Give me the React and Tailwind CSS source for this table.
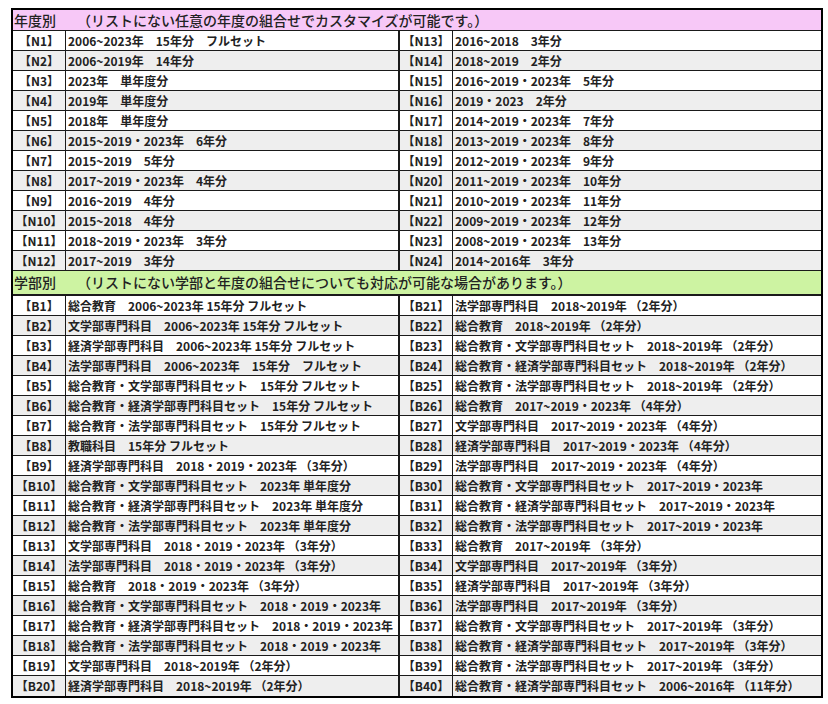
const nLeft = [
  ['N1', '2006~2023年　15年分　フルセット'],
  ['N2', '2006~2019年　14年分'],
  ['N3', '2023年　単年度分'],
  ['N4', '2019年　単年度分'],
  ['N5', '2018年　単年度分'],
  ['N6', '2015~2019・2023年　6年分'],
  ['N7', '2015~2019　5年分'],
  ['N8', '2017~2019・2023年　4年分'],
  ['N9', '2016~2019　4年分'],
  ['N10', '2015~2018　4年分'],
  ['N11', '2018~2019・2023年　3年分'],
  ['N12', '2017~2019　3年分'],
];

const nRight = [
  ['N13', '2016~2018　3年分'],
  ['N14', '2018~2019　2年分'],
  ['N15', '2016~2019・2023年　5年分'],
  ['N16', '2019・2023　2年分'],
  ['N17', '2014~2019・2023年　7年分'],
  ['N18', '2013~2019・2023年　8年分'],
  ['N19', '2012~2019・2023年　9年分'],
  ['N20', '2011~2019・2023年　10年分'],
  ['N21', '2010~2019・2023年　11年分'],
  ['N22', '2009~2019・2023年　12年分'],
  ['N23', '2008~2019・2023年　13年分'],
  ['N24', '2014~2016年　3年分'],
];

const bLeft = [
  ['B1', '総合教育　2006~2023年 15年分 フルセット'],
  ['B2', '文学部専門科目　2006~2023年 15年分 フルセット'],
  ['B3', '経済学部専門科目　2006~2023年 15年分 フルセット'],
  ['B4', '法学部専門科目　2006~2023年　15年分　フルセット'],
  ['B5', '総合教育・文学部専門科目セット　15年分 フルセット'],
  ['B6', '総合教育・経済学部専門科目セット　15年分 フルセット'],
  ['B7', '総合教育・法学部専門科目セット　15年分 フルセット'],
  ['B8', '教職科目　15年分 フルセット'],
  ['B9', '経済学部専門科目　2018・2019・2023年 （3年分）'],
  ['B10', '総合教育・文学部専門科目セット　2023年 単年度分'],
  ['B11', '総合教育・経済学部専門科目セット　2023年 単年度分'],
  ['B12', '総合教育・法学部専門科目セット　2023年 単年度分'],
  ['B13', '文学部専門科目　2018・2019・2023年 （3年分）'],
  ['B14', '法学部専門科目　2018・2019・2023年 （3年分）'],
  ['B15', '総合教育　2018・2019・2023年 （3年分）'],
  ['B16', '総合教育・文学部専門科目セット　2018・2019・2023年'],
  ['B17', '総合教育・経済学部専門科目セット　2018・2019・2023年'],
  ['B18', '総合教育・法学部専門科目セット　2018・2019・2023年'],
  ['B19', '文学部専門科目　2018~2019年 （2年分）'],
  ['B20', '経済学部専門科目　2018~2019年 （2年分）'],
];

const bRight = [
  ['B21', '法学部専門科目　2018~2019年 （2年分）'],
  ['B22', '総合教育　2018~2019年 （2年分）'],
  ['B23', '総合教育・文学部専門科目セット　2018~2019年 （2年分）'],
  ['B24', '総合教育・経済学部専門科目セット　2018~2019年 （2年分）'],
  ['B25', '総合教育・法学部専門科目セット　2018~2019年 （2年分）'],
  ['B26', '総合教育　2017~2019・2023年 （4年分）'],
  ['B27', '文学部専門科目　2017~2019・2023年 （4年分）'],
  ['B28', '経済学部専門科目　2017~2019・2023年 （4年分）'],
  ['B29', '法学部専門科目　2017~2019・2023年 （4年分）'],
  ['B30', '総合教育・文学部専門科目セット　2017~2019・2023年'],
  ['B31', '総合教育・経済学部専門科目セット　2017~2019・2023年'],
  ['B32', '総合教育・法学部専門科目セット　2017~2019・2023年'],
  ['B33', '総合教育　2017~2019年 （3年分）'],
  ['B34', '文学部専門科目　2017~2019年 （3年分）'],
  ['B35', '経済学部専門科目　2017~2019年 （3年分）'],
  ['B36', '法学部専門科目　2017~2019年 （3年分）'],
  ['B37', '総合教育・文学部専門科目セット　2017~2019年 （3年分）'],
  ['B38', '総合教育・経済学部専門科目セット　2017~2019年 （3年分）'],
  ['B39', '総合教育・法学部専門科目セット　2017~2019年 （3年分）'],
  ['B40', '総合教育・経済学部専門科目セット　2006~2016年 （11年分）'],
];

const Row = ({ left, right, index, last }) => {
  const shade = index % 2 === 1 ? 'bg-[#eeeeee]' : 'bg-white';
  return (
    <div className={`flex h-[20px] ${last ? '' : 'border-b border-[#1a1a1a]'} ${shade}`}>
      <div className="w-[53px] shrink-0 border-r border-[#1a1a1a] flex items-center justify-center">
        【{left[0]}】
      </div>
      <div className="w-[334px] shrink-0 border-r-2 border-[#1a1a1a] flex items-center pl-[2px] whitespace-nowrap overflow-hidden">
        {left[1]}
      </div>
      <div className="w-[53px] shrink-0 border-r border-[#1a1a1a] flex items-center justify-center">
        【{right[0]}】
      </div>
      <div className="flex-1 flex items-center pl-[2px] whitespace-nowrap overflow-hidden">
        {right[1]}
      </div>
    </div>
  );
};

export default function App() {
  return (
    <div className="min-h-[704px] bg-white pt-[8px] pl-[11px]">
      <div
        className="w-[812px] border-2 border-black text-[12px] font-bold text-[#222]"
        style={{ fontFamily: '"Noto Sans CJK JP", "Noto Sans", sans-serif' }}
      >
        {/* 年度別 */}
        <div className="h-[21px] bg-[#f7c8f7] border-b border-[#1a1a1a] flex items-center pl-[1px] text-[14px] font-medium whitespace-nowrap">
          年度別　　（リストにない任意の年度の組合せでカスタマイズが可能です。）
        </div>
        {nLeft.map((row, i) => (
          <Row key={row[0]} left={row} right={nRight[i]} index={i} />
        ))}

        {/* 学部別 */}
        <div className="h-[25px] bg-[#cdf3a2] border-b-2 border-[#1a1a1a] flex items-center pl-[1px] text-[14px] font-medium whitespace-nowrap">
          学部別　　（リストにない学部と年度の組合せについても対応が可能な場合があります。）
        </div>
        {bLeft.map((row, i) => (
          <Row key={row[0]} left={row} right={bRight[i]} index={i} last={i === bLeft.length - 1} />
        ))}
      </div>
    </div>
  );
}
